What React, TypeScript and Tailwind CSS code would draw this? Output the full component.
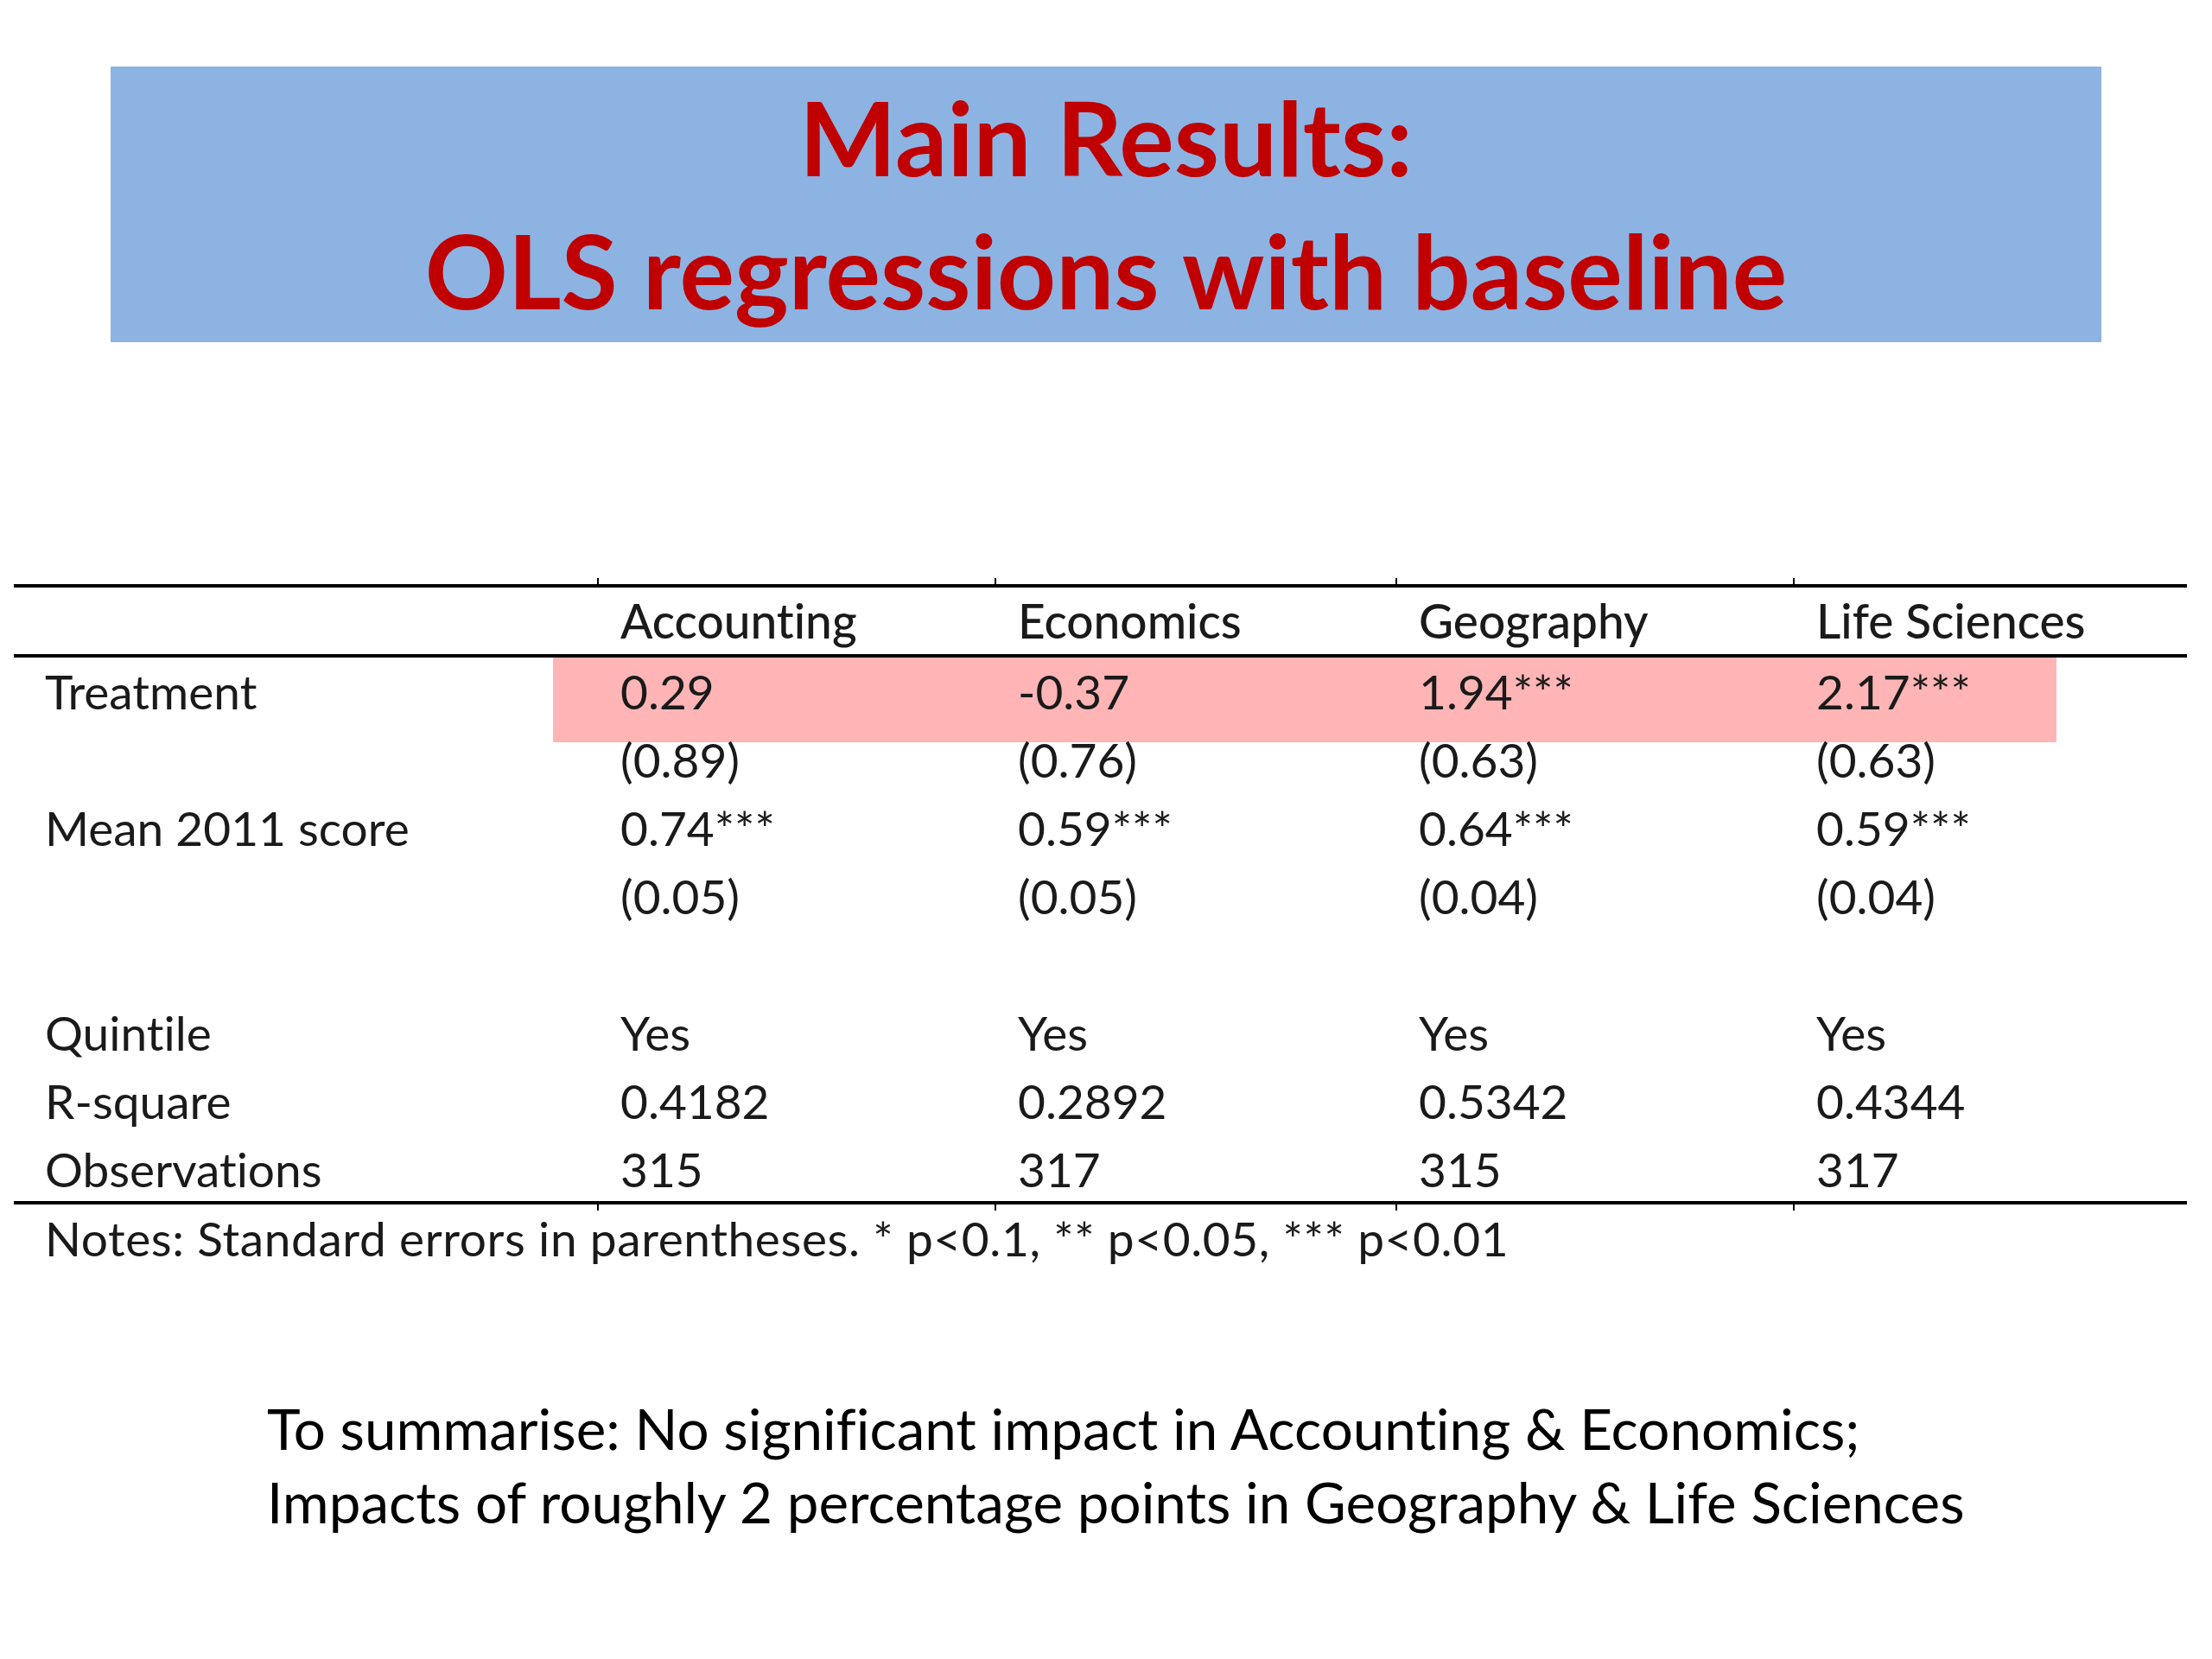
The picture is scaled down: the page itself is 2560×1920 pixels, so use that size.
const COLUMNS = ["Accounting", "Economics", "Geography", "Life Sciences"];

const ROWS: { label: string; values: string[] }[] = [
  { label: "Treatment", values: ["0.29", "-0.37", "1.94***", "2.17***"] },
  { label: "", values: ["(0.89)", "(0.76)", "(0.63)", "(0.63)"] },
  { label: "Mean 2011 score", values: ["0.74***", "0.59***", "0.64***", "0.59***"] },
  { label: "", values: ["(0.05)", "(0.05)", "(0.04)", "(0.04)"] },
  { label: "", values: ["", "", "", ""] },
  { label: "Quintile", values: ["Yes", "Yes", "Yes", "Yes"] },
  { label: "R-square", values: ["0.4182", "0.2892", "0.5342", "0.4344"] },
  { label: "Observations", values: ["315", "317", "315", "317"] },
];

const GRID = "grid grid-cols-[675px_460px_464px_460px_456px]";

function Rule({ ticks }: { ticks: "up" | "down" }): React.ReactElement {
  const tickRow = (
    <div className={`${GRID} h-[7px]`}>
      {[0, 1, 2, 3, 4].map((i) => (
        <div key={i} className={i === 0 ? "" : "border-l-2 border-black"} />
      ))}
    </div>
  );
  return (
    <div>
      {ticks === "up" && tickRow}
      <div className="h-[4px] bg-black" />
      {ticks === "down" && tickRow}
    </div>
  );
}

export default function App(): React.ReactElement {
  return (
    <main className="h-[1920px] w-[2560px] bg-white font-['Lato',sans-serif] text-[#1a1a1a] [font-variant-ligatures:none]">
      {/* Title banner */}
      <div className="pt-[77px]">
        <div className="mx-auto h-[319px] w-[2304px] bg-[#8db3e2] pt-[4px] text-center text-[119px] font-bold leading-[154px] text-[#c00000]">
          <p>Main Results:</p>
          <p>OLS regressions with baseline</p>
        </div>
      </div>

      {/* Regression table */}
      <div className="ml-[16px] mt-[273px] w-[2515px] text-[55px] leading-[79px]">
        <Rule ticks="up" />
        <div className={`${GRID} h-[77px] font-medium leading-[77px]`}>
          <div />
          {COLUMNS.map((c) => (
            <div key={c} className="pl-[27px]">
              {c}
            </div>
          ))}
        </div>
        <div className="h-[4px] bg-black" />

        <div className="relative">
          <div className="absolute left-[624px] top-0 h-[98px] w-[1740px] bg-[#ffb5b5]" />
          <div className="relative">
            {ROWS.map((row, r) => (
              <div key={r} className={`${GRID} h-[79px]`}>
                <div className="pl-[36px]">{row.label}</div>
                {row.values.map((v, i) => (
                  <div key={i} className="pl-[27px]">
                    {v}
                  </div>
                ))}
              </div>
            ))}
          </div>
        </div>

        <div className="-mt-[3px]">
          <Rule ticks="down" />
        </div>
        <p className="-mt-[7px] pl-[36px] tracking-[0.6px]">
          Notes: Standard errors in parentheses. * p&lt;0.1, ** p&lt;0.05, *** p&lt;0.01
        </p>
      </div>

      {/* Summary */}
      <div className="mt-[137px] pl-[309px] text-[65.5px] leading-[85px] text-black">
        <p>To summarise: No significant impact in Accounting &amp; Economics;</p>
        <p>Impacts of roughly 2 percentage points in Geography &amp; Life Sciences</p>
      </div>
    </main>
  );
}
